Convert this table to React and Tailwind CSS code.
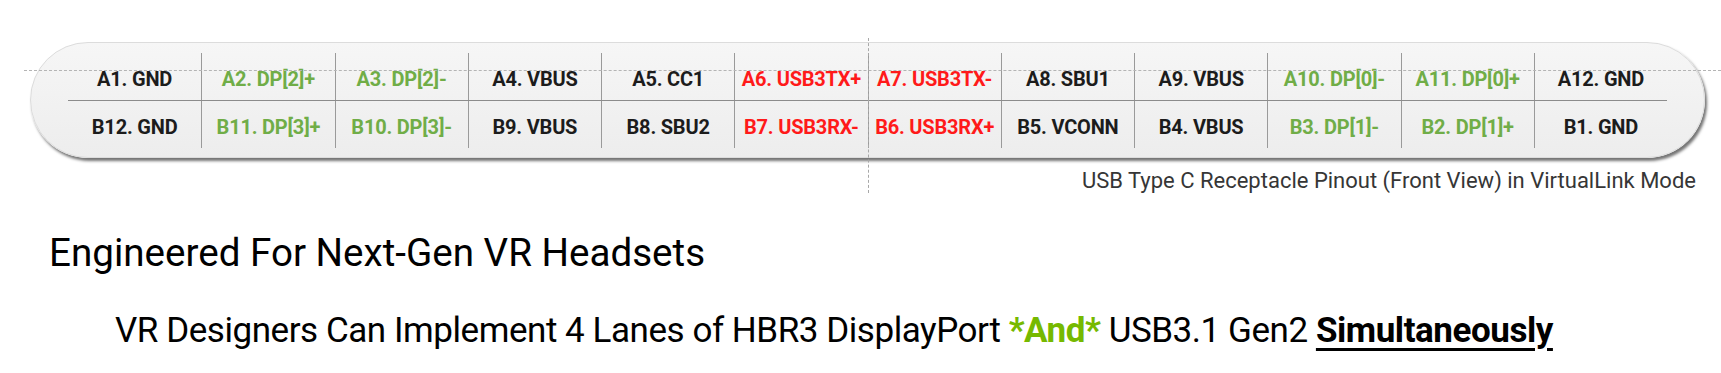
import React from 'react';

const GREEN = 'text-[#70ad47]';
const RED = 'text-[#ff1a1a]';
const DARK = 'text-[#1c1c1c]';

// top row A1..A12, bottom row B12..B1 (front view)
const topRow = [
  { label: 'A1. GND', tone: DARK },
  { label: 'A2. DP[2]+', tone: GREEN },
  { label: 'A3. DP[2]-', tone: GREEN },
  { label: 'A4. VBUS', tone: DARK },
  { label: 'A5. CC1', tone: DARK },
  { label: 'A6. USB3TX+', tone: RED },
  { label: 'A7. USB3TX-', tone: RED },
  { label: 'A8. SBU1', tone: DARK },
  { label: 'A9. VBUS', tone: DARK },
  { label: 'A10. DP[0]-', tone: GREEN },
  { label: 'A11. DP[0]+', tone: GREEN },
  { label: 'A12. GND', tone: DARK },
];

const bottomRow = [
  { label: 'B12. GND', tone: DARK },
  { label: 'B11. DP[3]+', tone: GREEN },
  { label: 'B10. DP[3]-', tone: GREEN },
  { label: 'B9. VBUS', tone: DARK },
  { label: 'B8. SBU2', tone: DARK },
  { label: 'B7. USB3RX-', tone: RED },
  { label: 'B6. USB3RX+', tone: RED },
  { label: 'B5. VCONN', tone: DARK },
  { label: 'B4. VBUS', tone: DARK },
  { label: 'B3. DP[1]-', tone: GREEN },
  { label: 'B2. DP[1]+', tone: GREEN },
  { label: 'B1. GND', tone: DARK },
];

const PinRow = ({ pins, top }) => (
  <div className={`grid grid-cols-12 ${top ? 'h-[48px] border-b border-[#8c8c8c]' : 'h-[47px]'}`}>
    {pins.map((pin, i) => (
      <div
        key={pin.label}
        className={`flex items-center justify-center pt-[5px] text-[20px] font-bold tracking-[-0.2px] whitespace-nowrap ${pin.tone} ${
          i > 0 ? 'border-l border-[#9a9a9a]' : ''
        }`}
      >
        {pin.label}
      </div>
    ))}
  </div>
);

export default function App() {
  return (
    <div className="relative w-[1721px] h-[373px] overflow-hidden bg-white font-['Roboto',sans-serif] text-black">
      {/* Pinout diagram */}
      <div className="pt-[42px] pl-[30px] pr-[16px]">
        <div className="h-[116px] rounded-[58px] border border-[#dcdcdc] bg-gradient-to-b from-[#f6f6f6] to-[#ededed] px-[37px] py-[10px] shadow-[2px_3px_3px_rgba(0,0,0,0.55)]">
          <PinRow pins={topRow} top />
          <PinRow pins={bottomRow} />
        </div>
      </div>

      <div className="mt-[10px] flex justify-end pr-[25px]">
        <p className="text-[22px] leading-[26px] text-[#363636]">
          USB Type C Receptacle Pinout (Front View) in VirtualLink Mode
        </p>
      </div>

      {/* guide lines over the diagram */}
      <div className="absolute left-[24px] right-0 top-[70px] border-t border-dashed border-[#b4b4b4]" />
      <div className="absolute left-[868px] top-[38px] h-[155px] border-l border-dashed border-[#a8a8a8]" />

      <h2 className="mt-[40px] pl-[49px] text-[38.6px] leading-[38px] font-normal">
        Engineered For Next-Gen VR Headsets
      </h2>

      <p className="mt-[41px] pl-[115px] text-[35px] leading-[35px] tracking-[-0.45px]">
        VR Designers Can Implement 4 Lanes of HBR3 DisplayPort{' '}
        <span className="font-bold text-[#76b900]">*And*</span> USB3.1 Gen2{' '}
        <span className="font-bold underline decoration-[3px] underline-offset-[6px]">Simultaneously</span>
      </p>
    </div>
  );
}
